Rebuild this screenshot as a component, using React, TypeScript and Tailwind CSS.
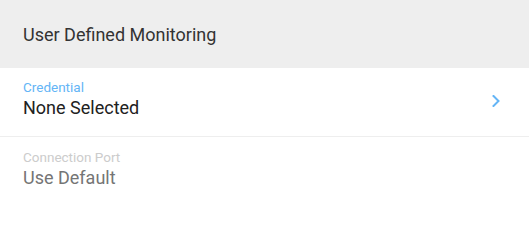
export default function App() {
  return (
    <div className="w-[529px] h-[204px] bg-white font-['Roboto',sans-serif] overflow-hidden">
      {/* Section header */}
      <div className="h-[68px] bg-[#eeeeee] flex items-center px-[23px]">
        <h2 className="text-[18px] text-[#333333]">User Defined Monitoring</h2>
      </div>

      {/* Credential row */}
      <div className="h-[69px] flex items-start pt-[11px] pl-[23px] pr-[29px] border-b border-[#eeeeee]">
        <div className="flex-1 flex flex-col">
          <span className="text-[13.5px] leading-[16px] text-[#64b5f6]">Credential</span>
          <span className="mt-[1px] text-[18px] leading-[24px] text-[#212121]">None Selected</span>
        </div>
        <svg className="mt-[16px] w-[8px] h-[12px]" viewBox="0 0 8 12" fill="none">
          <path d="M1.5 1 L6.5 6 L1.5 11" stroke="#64b5f6" strokeWidth="2" strokeLinecap="square" />
        </svg>
      </div>

      {/* Connection port row */}
      <div className="h-[67px] flex items-start pt-[12px] px-[23px]">
        <div className="flex flex-col">
          <span className="text-[13.5px] leading-[16px] text-[#cccccc]">Connection Port</span>
          <span className="mt-[1px] text-[18px] leading-[24px] text-[#757575]">Use Default</span>
        </div>
      </div>
    </div>
  );
}
